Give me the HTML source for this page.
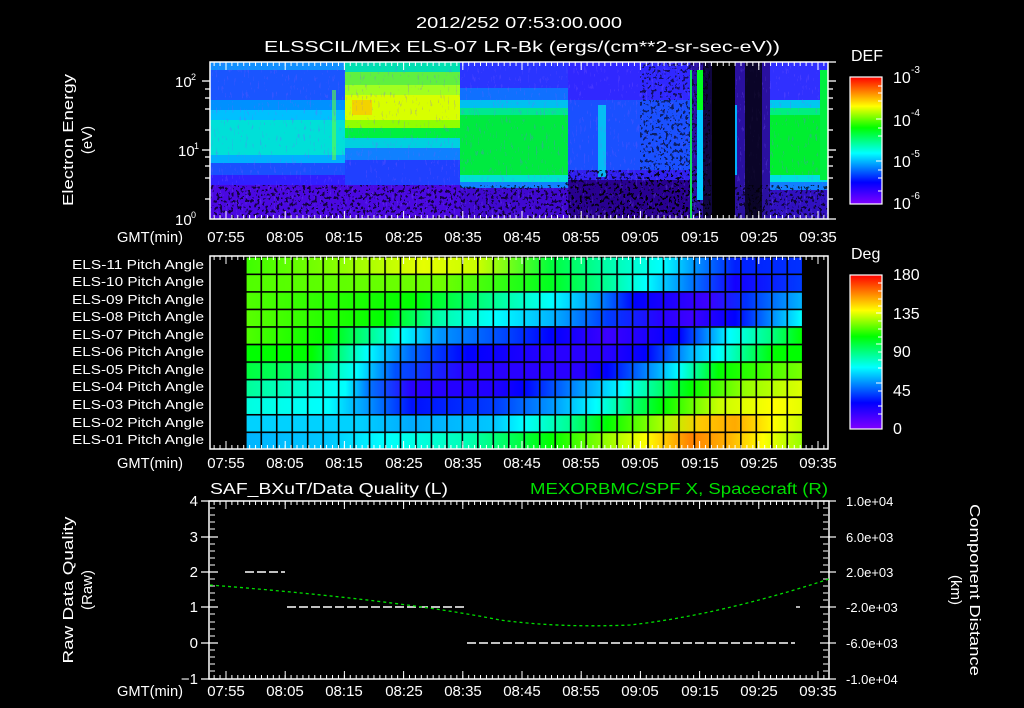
<!DOCTYPE html>
<html><head><meta charset="utf-8"><style>
html,body{margin:0;padding:0;background:#000;width:1024px;height:708px;overflow:hidden}
svg{display:block}
text{font-family:"Liberation Sans",sans-serif;fill:#fff}
</style></head><body>
<svg width="1024" height="708" viewBox="0 0 1024 708" xmlns="http://www.w3.org/2000/svg">
<defs>
<filter id="noise" x="0" y="0" width="100%" height="100%">
<feTurbulence type="fractalNoise" baseFrequency="0.5 0.12" numOctaves="2" seed="3" result="t"/>
<feColorMatrix in="t" type="matrix" values="0 0 0 0 0.2  0 0 0 0 0.1  0 0 0 0 1  2.2 0 0 0 -1.0"/>
<feComponentTransfer><feFuncA type="discrete" tableValues="0 0 0.7 0.9"/></feComponentTransfer>
</filter>
<filter id="noiseBlack" x="0" y="0" width="100%" height="100%">
<feTurbulence type="fractalNoise" baseFrequency="0.35 0.3" numOctaves="2" seed="7" result="t"/>
<feColorMatrix in="t" type="matrix" values="0 0 0 0 0  0 0 0 0 0  0 0 0 0 0  0 0 0 2.4 -0.95"/>
<feComponentTransfer><feFuncA type="discrete" tableValues="0 0 1 1"/></feComponentTransfer>
</filter>
<pattern id="minT" x="0.5" y="0" width="5.92" height="10" patternUnits="userSpaceOnUse"><rect x="0" y="0" width="1" height="10" fill="#fff"/></pattern>
<pattern id="majT" x="225.5" y="0" width="59.2" height="20" patternUnits="userSpaceOnUse"><rect x="0" y="0" width="1" height="20" fill="#fff"/></pattern>
<linearGradient id="cbar" x1="0" y1="1" x2="0" y2="0">
<stop offset="0" stop-color="#8000ff"/><stop offset="0.17" stop-color="#0000ff"/><stop offset="0.4" stop-color="#00ffff"/><stop offset="0.6" stop-color="#00ff00"/><stop offset="0.77" stop-color="#ffff00"/><stop offset="1" stop-color="#ff0000"/>
</linearGradient>
<linearGradient id="r1"><stop offset="0" stop-color="#3cff00"/><stop offset=".15" stop-color="#80ff00"/><stop offset=".32" stop-color="#e6ff00"/><stop offset=".42" stop-color="#c8ff00"/><stop offset=".55" stop-color="#00ff3c"/><stop offset=".65" stop-color="#00ffaa"/><stop offset=".75" stop-color="#00ffff"/><stop offset=".81" stop-color="#0090ff"/><stop offset=".88" stop-color="#0020ff"/><stop offset="1" stop-color="#0030ff"/></linearGradient>
<linearGradient id="r2"><stop offset="0" stop-color="#50ff00"/><stop offset=".35" stop-color="#70ff00"/><stop offset=".55" stop-color="#00ff20"/><stop offset=".65" stop-color="#00ff96"/><stop offset=".72" stop-color="#00ffff"/><stop offset=".8" stop-color="#0078ff"/><stop offset=".88" stop-color="#1400ff"/><stop offset="1" stop-color="#003cff"/></linearGradient>
<linearGradient id="r3"><stop offset="0" stop-color="#50ff00"/><stop offset=".3" stop-color="#00ff00"/><stop offset=".45" stop-color="#00ff96"/><stop offset=".55" stop-color="#00ffff"/><stop offset=".63" stop-color="#0096ff"/><stop offset=".7" stop-color="#0000ff"/><stop offset=".83" stop-color="#3c00ff"/><stop offset=".9" stop-color="#0030ff"/><stop offset="1" stop-color="#00b4ff"/></linearGradient>
<linearGradient id="r4"><stop offset="0" stop-color="#5aff00"/><stop offset=".25" stop-color="#00ff00"/><stop offset=".35" stop-color="#00ffaa"/><stop offset=".45" stop-color="#00ffff"/><stop offset=".55" stop-color="#00b4ff"/><stop offset=".65" stop-color="#003cff"/><stop offset=".75" stop-color="#2800ff"/><stop offset=".8" stop-color="#3c00ff"/><stop offset=".88" stop-color="#0000ff"/><stop offset="1" stop-color="#00ffff"/></linearGradient>
<linearGradient id="r5"><stop offset="0" stop-color="#50ff00"/><stop offset=".15" stop-color="#00ff00"/><stop offset=".28" stop-color="#00ffff"/><stop offset=".35" stop-color="#0096ff"/><stop offset=".48" stop-color="#003cff"/><stop offset=".55" stop-color="#0000ff"/><stop offset=".65" stop-color="#3c00ff"/><stop offset=".78" stop-color="#0000ff"/><stop offset=".87" stop-color="#00ffff"/><stop offset=".95" stop-color="#00ff78"/><stop offset="1" stop-color="#00ff00"/></linearGradient>
<linearGradient id="r6"><stop offset="0" stop-color="#00ff00"/><stop offset=".12" stop-color="#00ff00"/><stop offset=".18" stop-color="#00ff96"/><stop offset=".22" stop-color="#00ffff"/><stop offset=".3" stop-color="#0064ff"/><stop offset=".4" stop-color="#0000ff"/><stop offset=".55" stop-color="#2800ff"/><stop offset=".65" stop-color="#2800ff"/><stop offset=".72" stop-color="#0000ff"/><stop offset=".8" stop-color="#00b4ff"/><stop offset=".85" stop-color="#00ffff"/><stop offset=".95" stop-color="#00ff00"/><stop offset="1" stop-color="#00ff00"/></linearGradient>
<linearGradient id="r7"><stop offset="0" stop-color="#00ff3c"/><stop offset=".12" stop-color="#00ff78"/><stop offset=".2" stop-color="#00ffff"/><stop offset=".27" stop-color="#0050ff"/><stop offset=".4" stop-color="#2800ff"/><stop offset=".6" stop-color="#2800ff"/><stop offset=".65" stop-color="#0000ff"/><stop offset=".73" stop-color="#0096ff"/><stop offset=".78" stop-color="#00ffff"/><stop offset=".85" stop-color="#00ff00"/><stop offset="1" stop-color="#78ff00"/></linearGradient>
<linearGradient id="r8"><stop offset="0" stop-color="#00ff96"/><stop offset=".18" stop-color="#00ffff"/><stop offset=".22" stop-color="#0078ff"/><stop offset=".3" stop-color="#2800ff"/><stop offset=".45" stop-color="#2000ff"/><stop offset=".5" stop-color="#0000ff"/><stop offset=".6" stop-color="#0096ff"/><stop offset=".68" stop-color="#00ffff"/><stop offset=".8" stop-color="#00ff00"/><stop offset=".9" stop-color="#96ff00"/><stop offset="1" stop-color="#dcff00"/></linearGradient>
<linearGradient id="r9"><stop offset="0" stop-color="#00ffe0"/><stop offset=".15" stop-color="#00ffff"/><stop offset=".22" stop-color="#0096ff"/><stop offset=".3" stop-color="#0010ff"/><stop offset=".45" stop-color="#003cff"/><stop offset=".55" stop-color="#0096ff"/><stop offset=".63" stop-color="#00ffff"/><stop offset=".75" stop-color="#00ff00"/><stop offset=".85" stop-color="#c8ff00"/><stop offset=".95" stop-color="#ffff00"/><stop offset="1" stop-color="#e6ff00"/></linearGradient>
<linearGradient id="r10"><stop offset="0" stop-color="#00d2ff"/><stop offset=".2" stop-color="#00d2ff"/><stop offset=".3" stop-color="#00aaff"/><stop offset=".45" stop-color="#00c8ff"/><stop offset=".5" stop-color="#00ffff"/><stop offset=".58" stop-color="#00ff96"/><stop offset=".65" stop-color="#00ff00"/><stop offset=".75" stop-color="#aaff00"/><stop offset=".82" stop-color="#ffc800"/><stop offset=".88" stop-color="#ffaa00"/><stop offset=".95" stop-color="#ffff00"/><stop offset="1" stop-color="#c8ff00"/></linearGradient>
<linearGradient id="r11"><stop offset="0" stop-color="#00b4ff"/><stop offset=".15" stop-color="#00c8ff"/><stop offset=".25" stop-color="#00ffff"/><stop offset=".4" stop-color="#00ffb4"/><stop offset=".55" stop-color="#00ff00"/><stop offset=".65" stop-color="#96ff00"/><stop offset=".72" stop-color="#ffff00"/><stop offset=".8" stop-color="#ff8200"/><stop offset=".87" stop-color="#ffb400"/><stop offset=".93" stop-color="#ffff00"/><stop offset="1" stop-color="#96ff00"/></linearGradient>
<pattern id="gridV" x="245" y="0" width="15.47" height="10" patternUnits="userSpaceOnUse"><rect x="0" y="0" width="1.6" height="10" fill="#000"/></pattern>
<pattern id="gridH" x="0" y="256" width="10" height="17.55" patternUnits="userSpaceOnUse"><rect x="0" y="0" width="10" height="1.6" fill="#000"/></pattern>
</defs>

<text x="416" y="28" font-size="16" textLength="206" lengthAdjust="spacingAndGlyphs">2012/252 07:53:00.000</text>
<text x="264" y="52" font-size="16" textLength="516" lengthAdjust="spacingAndGlyphs">ELSSCIL/MEx ELS-07 LR-Bk  (ergs/(cm**2-sr-sec-eV))</text>

<clipPath id="c1"><rect x="210" y="62" width="618" height="157"/></clipPath>
<g clip-path="url(#c1)">
<!-- Column A -->
<rect x="210" y="62" width="135" height="8" fill="#1090ff"/>
<rect x="210" y="70" width="135" height="30" fill="#1a55ff"/>
<rect x="210" y="100" width="135" height="10" fill="#0090ff"/>
<rect x="210" y="110" width="135" height="10" fill="#00c0ff"/>
<rect x="210" y="120" width="135" height="35" fill="#00e0d8"/>
<rect x="210" y="155" width="135" height="8" fill="#00b0ff"/>
<rect x="210" y="163" width="135" height="12" fill="#1a50ff"/>
<rect x="210" y="175" width="135" height="10" fill="#3020ff"/>
<rect x="210" y="185" width="135" height="34" fill="#4a08e0"/>
<!-- Column B -->
<rect x="345" y="62" width="115" height="10" fill="#00e0b0"/>
<rect x="345" y="72" width="115" height="13" fill="#60f040"/>
<rect x="345" y="85" width="115" height="10" fill="#a0ff20"/>
<rect x="345" y="95" width="115" height="25" fill="#d8ff00"/>
<rect x="345" y="120" width="115" height="8" fill="#90ff00"/>
<rect x="345" y="128" width="115" height="10" fill="#00f040"/>
<rect x="345" y="138" width="115" height="10" fill="#00d0e0"/>
<rect x="345" y="148" width="115" height="12" fill="#1080ff"/>
<rect x="345" y="160" width="115" height="25" fill="#2040ff"/>
<rect x="345" y="185" width="115" height="34" fill="#4a08e0"/>
<rect x="352" y="100" width="20" height="15" fill="#ffc000" opacity="0.7"/>
<!-- Column C -->
<rect x="460" y="62" width="108" height="26" fill="#2a35ff"/>
<rect x="460" y="88" width="108" height="12" fill="#1070ff"/>
<rect x="460" y="100" width="108" height="8" fill="#00c0f0"/>
<rect x="460" y="108" width="108" height="7" fill="#00e890"/>
<rect x="460" y="115" width="108" height="60" fill="#00ea40"/>
<rect x="460" y="175" width="108" height="7" fill="#00e0d0"/>
<rect x="460" y="182" width="108" height="6" fill="#1080ff"/>
<rect x="460" y="188" width="108" height="31" fill="#4008d0"/>
<!-- Column D -->
<rect x="568" y="62" width="122" height="38" fill="#3028ff"/>
<rect x="568" y="100" width="122" height="70" fill="#1a50ff"/>
<rect x="568" y="170" width="122" height="10" fill="#3020f0"/>
<rect x="568" y="180" width="122" height="39" fill="#280090"/>
<!-- Column E -->
<rect x="690" y="62" width="80" height="157" fill="#2a10a0"/>
<!-- Column F -->
<rect x="770" y="62" width="58" height="38" fill="#3030ff"/>
<rect x="770" y="100" width="58" height="8" fill="#00c8f0"/>
<rect x="770" y="108" width="58" height="7" fill="#00ee80"/>
<rect x="770" y="115" width="58" height="60" fill="#00ee30"/>
<rect x="770" y="175" width="58" height="7" fill="#00e0e0"/>
<rect x="770" y="182" width="58" height="8" fill="#1080ff"/>
<rect x="770" y="190" width="58" height="29" fill="#3010c0"/>

<rect x="332" y="90" width="4" height="70" fill="#60ff40" opacity="0.6"/>
<rect x="598" y="105" width="8" height="72" fill="#00d8f0" opacity="0.8"/>
<rect x="210" y="62" width="618" height="157" fill="#000" filter="url(#noise)" opacity="0.35"/>
<rect x="210" y="185" width="618" height="34" fill="#000" filter="url(#noiseBlack)" opacity="0.7"/>
<rect x="565" y="170" width="140" height="49" fill="#000" filter="url(#noiseBlack)" opacity="0.7"/>
<rect x="640" y="62" width="70" height="157" fill="#000" filter="url(#noiseBlack)" opacity="0.6"/>
<rect x="690" y="70" width="2" height="150" fill="#10e060"/>
<rect x="697" y="70" width="6" height="40" fill="#00ff20"/>
<rect x="697" y="110" width="6" height="90" fill="#00c8ff"/>
<rect x="703" y="62" width="9" height="157" fill="#000" opacity="0.6"/>
<rect x="712" y="62" width="23" height="157" fill="#000"/>
<rect x="745" y="62" width="17" height="157" fill="#000" opacity="0.75"/>
<rect x="735" y="105" width="2" height="70" fill="#00b0ff"/>
<rect x="820" y="70" width="8" height="110" fill="#00f040"/>
</g>
<rect x="210" y="62" width="618" height="157" fill="none" stroke="#fff" stroke-width="1.5"/>
<rect x="210" y="62" width="618" height="4" fill="url(#minT)"/>
<rect x="210" y="62" width="618" height="8" fill="url(#majT)"/>
<rect x="210" y="215" width="618" height="4" fill="url(#minT)"/>
<rect x="210" y="211" width="618" height="8" fill="url(#majT)"/>
<g stroke="#fff" stroke-width="1.3">
<line x1="202" y1="81" x2="210" y2="81"/><line x1="205" y1="89" x2="210" y2="89"/><line x1="205" y1="98" x2="210" y2="98"/><line x1="205" y1="109" x2="210" y2="109"/><line x1="205" y1="130" x2="210" y2="130"/>
<line x1="202" y1="150" x2="210" y2="150"/><line x1="205" y1="157" x2="210" y2="157"/><line x1="205" y1="166" x2="210" y2="166"/><line x1="205" y1="178" x2="210" y2="178"/><line x1="205" y1="199" x2="210" y2="199"/>
<line x1="828" y1="81" x2="836" y2="81"/><line x1="828" y1="89" x2="833" y2="89"/><line x1="828" y1="98" x2="833" y2="98"/><line x1="828" y1="109" x2="833" y2="109"/><line x1="828" y1="130" x2="833" y2="130"/>
<line x1="828" y1="150" x2="836" y2="150"/><line x1="828" y1="157" x2="833" y2="157"/><line x1="828" y1="166" x2="833" y2="166"/><line x1="828" y1="178" x2="833" y2="178"/><line x1="828" y1="199" x2="833" y2="199"/>
<line x1="828" y1="219" x2="836" y2="219"/><line x1="828" y1="62" x2="836" y2="62"/>
</g>
<text x="175" y="87" font-size="15">10</text><text x="191" y="80" font-size="9">2</text>
<text x="178" y="156" font-size="15">10</text><text x="194" y="149" font-size="9">1</text>
<text x="175" y="225" font-size="15">10</text><text x="191" y="218" font-size="9">0</text>
<text transform="translate(73,140) rotate(-90)" font-size="15" text-anchor="middle" textLength="132" lengthAdjust="spacingAndGlyphs">Electron Energy</text>
<text transform="translate(92,140) rotate(-90)" font-size="15" text-anchor="middle">(eV)</text>

<g font-size="15" text-anchor="middle">
<text x="150" y="242" textLength="66" lengthAdjust="spacingAndGlyphs">GMT(min)</text>
<text x="226" y="242">07:55</text><text x="285" y="242">08:05</text><text x="344" y="242">08:15</text><text x="404" y="242">08:25</text><text x="463" y="242">08:35</text><text x="522" y="242">08:45</text><text x="581" y="242">08:55</text><text x="640" y="242">09:05</text><text x="700" y="242">09:15</text><text x="759" y="242">09:25</text><text x="818" y="242">09:35</text>
<text x="150" y="468" textLength="66" lengthAdjust="spacingAndGlyphs">GMT(min)</text>
<text x="226" y="468">07:55</text><text x="285" y="468">08:05</text><text x="344" y="468">08:15</text><text x="404" y="468">08:25</text><text x="463" y="468">08:35</text><text x="522" y="468">08:45</text><text x="581" y="468">08:55</text><text x="640" y="468">09:05</text><text x="700" y="468">09:15</text><text x="759" y="468">09:25</text><text x="818" y="468">09:35</text>
<text x="150" y="696" textLength="66" lengthAdjust="spacingAndGlyphs">GMT(min)</text>
<text x="226" y="696">07:55</text><text x="285" y="696">08:05</text><text x="344" y="696">08:15</text><text x="404" y="696">08:25</text><text x="463" y="696">08:35</text><text x="522" y="696">08:45</text><text x="581" y="696">08:55</text><text x="640" y="696">09:05</text><text x="700" y="696">09:15</text><text x="759" y="696">09:25</text><text x="818" y="696">09:35</text>
</g>

<text x="851" y="61" font-size="16">DEF</text>
<rect x="850" y="77" width="32" height="127" fill="url(#cbar)" stroke="#fff" stroke-width="1.2"/>
<g stroke="#fff" stroke-width="1"><line x1="878" y1="86" x2="882" y2="86"/><line x1="878" y1="93" x2="882" y2="93"/><line x1="878" y1="101" x2="882" y2="101"/><line x1="876" y1="119" x2="882" y2="119"/><line x1="878" y1="128" x2="882" y2="128"/><line x1="878" y1="136" x2="882" y2="136"/><line x1="876" y1="161" x2="882" y2="161"/><line x1="878" y1="170" x2="882" y2="170"/><line x1="878" y1="178" x2="882" y2="178"/><line x1="878" y1="191" x2="882" y2="191"/></g>
<g font-size="16"><text x="893" y="83">10</text><text x="893" y="126">10</text><text x="893" y="167">10</text><text x="893" y="209">10</text></g>
<g font-size="10"><text x="911" y="73">-3</text><text x="911" y="116">-4</text><text x="911" y="157">-5</text><text x="911" y="199">-6</text></g>

<text x="851" y="259" font-size="16">Deg</text>
<rect x="850" y="275" width="32" height="154" fill="url(#cbar)" stroke="#fff" stroke-width="1.2"/>
<g stroke="#fff" stroke-width="1"><line x1="878" y1="283" x2="882" y2="283"/><line x1="878" y1="291" x2="882" y2="291"/><line x1="878" y1="299" x2="882" y2="299"/><line x1="878" y1="306" x2="882" y2="306"/><line x1="876" y1="313" x2="882" y2="313"/><line x1="878" y1="321" x2="882" y2="321"/><line x1="878" y1="329" x2="882" y2="329"/><line x1="878" y1="337" x2="882" y2="337"/><line x1="876" y1="344" x2="882" y2="344"/><line x1="878" y1="352" x2="882" y2="352"/><line x1="878" y1="360" x2="882" y2="360"/><line x1="878" y1="368" x2="882" y2="368"/><line x1="876" y1="383" x2="882" y2="383"/><line x1="878" y1="391" x2="882" y2="391"/><line x1="878" y1="406" x2="882" y2="406"/><line x1="878" y1="414" x2="882" y2="414"/></g>
<g font-size="16"><text x="893" y="280">180</text><text x="893" y="319">135</text><text x="893" y="357">90</text><text x="893" y="396">45</text><text x="893" y="434">0</text></g>

<rect x="210" y="256" width="618" height="193" fill="#000"/>
<g>
<rect x="245" y="256" width="557" height="17.6" fill="url(#r1)"/>
<rect x="245" y="273.5" width="557" height="17.6" fill="url(#r2)"/>
<rect x="245" y="291" width="557" height="17.6" fill="url(#r3)"/>
<rect x="245" y="308.6" width="557" height="17.6" fill="url(#r4)"/>
<rect x="245" y="326.2" width="557" height="17.6" fill="url(#r5)"/>
<rect x="245" y="343.8" width="557" height="17.6" fill="url(#r6)"/>
<rect x="245" y="361.3" width="557" height="17.6" fill="url(#r7)"/>
<rect x="245" y="378.9" width="557" height="17.6" fill="url(#r8)"/>
<rect x="245" y="396.4" width="557" height="17.6" fill="url(#r9)"/>
<rect x="245" y="414" width="557" height="17.6" fill="url(#r10)"/>
<rect x="245" y="431.5" width="557" height="17.5" fill="url(#r11)"/>
<rect x="245" y="256" width="557" height="193" fill="url(#gridV)"/>
<rect x="245" y="256" width="557" height="193" fill="url(#gridH)"/>
</g>
<rect x="210" y="256" width="618" height="193" fill="none" stroke="#fff" stroke-width="1.5"/>
<rect x="210" y="256" width="618" height="4" fill="url(#minT)"/>
<rect x="210" y="256" width="618" height="8" fill="url(#majT)"/>
<rect x="210" y="445" width="618" height="4" fill="url(#minT)"/>
<rect x="210" y="441" width="618" height="8" fill="url(#majT)"/>
<g font-size="13" text-anchor="end">
<text x="204" y="269" textLength="132" lengthAdjust="spacingAndGlyphs">ELS-11 Pitch Angle</text><text x="204" y="286" textLength="132" lengthAdjust="spacingAndGlyphs">ELS-10 Pitch Angle</text><text x="204" y="304" textLength="132" lengthAdjust="spacingAndGlyphs">ELS-09 Pitch Angle</text><text x="204" y="321" textLength="132" lengthAdjust="spacingAndGlyphs">ELS-08 Pitch Angle</text><text x="204" y="339" textLength="132" lengthAdjust="spacingAndGlyphs">ELS-07 Pitch Angle</text><text x="204" y="356" textLength="132" lengthAdjust="spacingAndGlyphs">ELS-06 Pitch Angle</text><text x="204" y="374" textLength="132" lengthAdjust="spacingAndGlyphs">ELS-05 Pitch Angle</text><text x="204" y="391" textLength="132" lengthAdjust="spacingAndGlyphs">ELS-04 Pitch Angle</text><text x="204" y="409" textLength="132" lengthAdjust="spacingAndGlyphs">ELS-03 Pitch Angle</text><text x="204" y="427" textLength="132" lengthAdjust="spacingAndGlyphs">ELS-02 Pitch Angle</text><text x="204" y="444" textLength="132" lengthAdjust="spacingAndGlyphs">ELS-01 Pitch Angle</text>
</g>

<text x="210" y="494" font-size="16" textLength="238" lengthAdjust="spacingAndGlyphs">SAF_BXuT/Data Quality (L)</text>
<text x="530" y="494" font-size="16" style="fill:#00e000" textLength="298" lengthAdjust="spacingAndGlyphs">MEXORBMC/SPF X, Spacecraft (R)</text>
<rect x="209" y="501" width="620" height="178" fill="none" stroke="#fff" stroke-width="1.5"/>
<rect x="209" y="501" width="620" height="4" fill="url(#minT)"/>
<rect x="209" y="501" width="620" height="8" fill="url(#majT)"/>
<rect x="209" y="675" width="620" height="4" fill="url(#minT)"/>
<rect x="209" y="671" width="620" height="8" fill="url(#majT)"/>
<g stroke="#fff" stroke-width="1.2">
<line x1="201" y1="501" x2="218" y2="501"/><line x1="201" y1="537" x2="218" y2="537"/><line x1="201" y1="572" x2="218" y2="572"/><line x1="201" y1="607" x2="218" y2="607"/><line x1="201" y1="643" x2="218" y2="643"/><line x1="201" y1="679" x2="218" y2="679"/>
<line x1="820" y1="501" x2="836" y2="501"/><line x1="820" y1="537" x2="836" y2="537"/><line x1="820" y1="572" x2="836" y2="572"/><line x1="820" y1="607" x2="836" y2="607"/><line x1="820" y1="643" x2="836" y2="643"/><line x1="820" y1="679" x2="836" y2="679"/>
</g>
<g stroke="#fff" stroke-width="1">
<path d="M210 508h5M210 515h5M210 522h5M210 529h5M210 544h5M210 551h5M210 558h5M210 565h5M210 579h5M210 586h5M210 593h5M210 600h5M210 614h5M210 622h5M210 629h5M210 636h5M210 650h5M210 657h5M210 664h5M210 671h5"/>
<path d="M823 508h5M823 515h5M823 522h5M823 529h5M823 544h5M823 551h5M823 558h5M823 565h5M823 579h5M823 586h5M823 593h5M823 600h5M823 614h5M823 622h5M823 629h5M823 636h5M823 650h5M823 657h5M823 664h5M823 671h5"/>
</g>
<g font-size="15" text-anchor="end">
<text x="198" y="506">4</text><text x="198" y="542">3</text><text x="198" y="577">2</text><text x="198" y="612">1</text><text x="198" y="648">0</text><text x="198" y="684">−1</text>
</g>
<g font-size="13">
<text x="846" y="506">1.0e+04</text><text x="846" y="542">6.0e+03</text><text x="846" y="577">2.0e+03</text><text x="846" y="612">-2.0e+03</text><text x="846" y="648">-6.0e+03</text><text x="846" y="684">-1.0e+04</text>
</g>
<text transform="translate(73,590) rotate(-90)" font-size="15" text-anchor="middle" textLength="147" lengthAdjust="spacingAndGlyphs">Raw Data Quality</text>
<text transform="translate(92,590) rotate(-90)" font-size="15" text-anchor="middle">(Raw)</text>
<text transform="translate(970,590) rotate(90)" font-size="15" text-anchor="middle" textLength="172" lengthAdjust="spacingAndGlyphs">Component Distance</text>
<text transform="translate(951,590) rotate(90)" font-size="15" text-anchor="middle">(km)</text>
<g stroke="#fff" stroke-width="1.4" stroke-dasharray="9 3">
<line x1="245" y1="572" x2="285" y2="572"/>
<line x1="287" y1="607" x2="465" y2="607"/>
<line x1="467" y1="643" x2="795" y2="643"/>
<line x1="796" y1="607" x2="800" y2="607"/>
</g>
<path d="M210 585 Q 400 600 500 620 Q 560 628 630 625 Q 720 615 829 579" fill="none" stroke="#00dd00" stroke-width="1.3" stroke-dasharray="3 3"/>
</svg>
</body></html>
